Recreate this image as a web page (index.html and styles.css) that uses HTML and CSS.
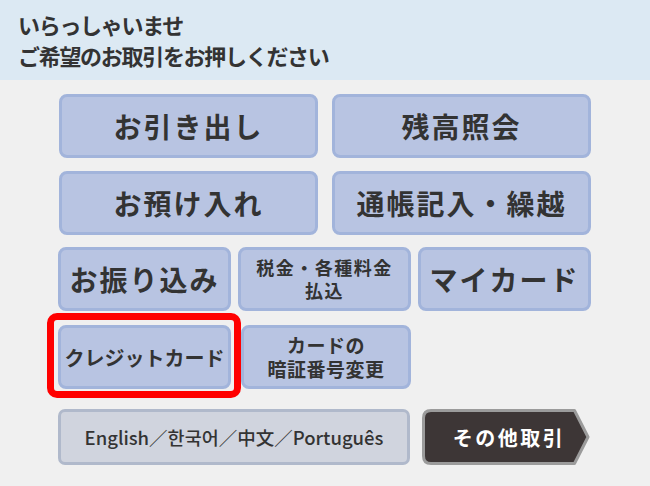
FILE: index.html
```html
<!DOCTYPE html>
<html lang="ja">
<head>
<meta charset="utf-8">
<link rel="stylesheet" href="styles.css">
</head>
<body>
<header class="header">
  <div class="header-line">いらっしゃいませ</div>
  <div class="header-line">ご希望のお取引をお押しください</div>
</header>
<main class="menu">
  <div class="row row-2">
    <button class="btn big">お引き出し</button>
    <button class="btn big">残高照会</button>
  </div>
  <div class="row row-2 r2">
    <button class="btn big">お預け入れ</button>
    <button class="btn big">通帳記入・繰越</button>
  </div>
  <div class="row row-3">
    <button class="btn big">お振り込み</button>
    <button class="btn small"><span class="ln">税金・各種料金</span><span class="ln">払込</span></button>
    <button class="btn big">マイカード</button>
  </div>
  <div class="row row-4">
    <button class="btn mid selected">クレジットカード</button>
    <button class="btn small"><span class="ln">カードの</span><span class="ln">暗証番号変更</span></button>
  </div>
  <div class="row row-5">
    <button class="lang">English／한국어／中文／Português</button>
    <button class="other">
      <svg class="other-shape" width="168" height="56" viewBox="0 0 168 56">
        <path d="M9 1.5 H152.5 L166 28 L152.5 54.5 H9 Q1.5 54.5 1.5 47 V9 Q1.5 1.5 9 1.5 Z" fill="#3d3636" stroke="#9b9b9b" stroke-width="3" stroke-linejoin="round"/>
      </svg>
      <span class="other-label">その他取引</span>
    </button>
  </div>
</main>
</body>
</html>
```

FILE: styles.css
```css
* { box-sizing: border-box; }
html, body { margin: 0; padding: 0; }
body {
  width: 650px;
  height: 486px;
  overflow: hidden;
  background: #f0f0f0;
  font-family: "Noto Sans CJK JP", "Noto Sans", sans-serif;
  color: #333;
}
.header {
  height: 80px;
  background: #dce9f3;
  padding: 9px 0 0 18px;
}
.header-line {
  font-size: 22px;
  line-height: 31px;
  font-weight: 700;
  letter-spacing: -1.3px;
  color: #333;
}
.menu {
  padding-left: 58px;
}
.row { display: flex; }
.row-2 { margin-top: 14px; gap: 14px; padding-left: 1px; }
.row-2.r2 { margin-top: 13px; }
.row-2 .btn { width: 259px; height: 64px; }
.row-3 { margin-top: 12px; gap: 7px; }
.row-3 .btn { width: 173px; height: 64px; }
.row-4 { margin-top: 14px; gap: 10px; }
.row-4 .btn { width: 173px; height: 64px; }
.row-4 .btn:nth-child(2) { width: 170px; }
.row-5 { margin-top: 20px; gap: 12px; align-items: stretch; }

.btn {
  font-family: inherit;
  color: #333;
  background: #b8c4e2;
  border: 3px solid #a2b4db;
  border-radius: 8px;
  padding: 0;
  margin: 0;
  display: flex;
  flex-direction: column;
  align-items: center;
  justify-content: center;
  text-align: center;
  font-weight: 700;
}
.big { font-size: 28px; letter-spacing: 2px; }
.small { font-size: 18px; letter-spacing: 1.5px; }
.small .ln { display: block; line-height: 23px; height: 23px; }
.mid { font-size: 20px; letter-spacing: 0; }
.row-4 .small { font-size: 19px; letter-spacing: 0.5px; }
.row-4 .small .ln { line-height: 24px; height: 24px; }

.selected { position: relative; }
.selected::after {
  content: "";
  position: absolute;
  left: -14px;
  top: -15px;
  right: -13px;
  bottom: -12px;
  border: 7px solid #ff0000;
  border-radius: 10px;
  pointer-events: none;
}

.lang {
  width: 352px;
  height: 56px;
  font-family: inherit;
  font-size: 18.5px;
  font-weight: 500;
  letter-spacing: 0;
  color: #333;
  background: #d0d4de;
  border: 3px solid #b0b9cb;
  border-radius: 7px;
  padding: 0;
  margin: 0;
}
.other {
  position: relative;
  width: 168px;
  height: 56px;
  background: none;
  border: 0;
  padding: 0 0 0 6px;
  margin: 0;
  font-family: inherit;
  display: flex;
  align-items: center;
  justify-content: center;
}
.other-shape { position: absolute; left: 0; top: 0; }
.other-label {
  position: relative;
  color: #fff;
  font-size: 20px;
  font-weight: 700;
  letter-spacing: 2.5px;
}
```
